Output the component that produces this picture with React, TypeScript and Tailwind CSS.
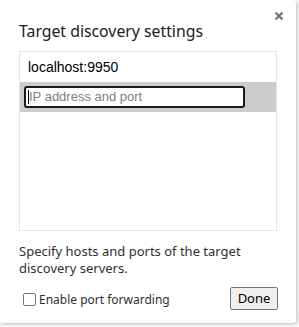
import React from 'react';

export default function App() {
  return (
    <div className="w-[299px] h-[327px] bg-white">
      <div
        className="relative flex flex-col w-[296px] h-[323px] rounded-[3px] bg-white shadow-[1px_1px_4px_rgba(0,0,0,0.3)] px-[19px] pt-[20px]"
        style={{ fontFamily: '"Noto Sans", "Open Sans", sans-serif' }}
      >
        <button className="absolute right-[12px] top-[11px] w-[10px] h-[10px] flex items-center justify-center">
          <svg width="10" height="10" viewBox="0 0 10 10">
            <path d="M1.5 1.5 L8.5 8.5 M8.5 1.5 L1.5 8.5" stroke="#6e6e6e" strokeWidth="2" />
          </svg>
        </button>

        <h1 className="text-[15.8px] leading-[22px] text-[#202020] font-normal">Target discovery settings</h1>

        <div className="mt-[9px] h-[180px] border border-[#e6e6e6] flex flex-col">
          <div
            className="h-[30px] flex items-center pl-[8px] text-[14px] text-black"
            style={{ fontFamily: '"Liberation Sans", Arial, sans-serif' }}
          >
            localhost:9950
          </div>
          <div className="h-[30px] bg-[#cccccc] flex items-center pl-[4px]">
            <div
              className="w-[221px] h-[22px] bg-white border-2 border-[#1a1a1a] rounded-[3px] flex items-center pl-[2px] text-[13px] text-[#808080]"
              style={{ fontFamily: '"Liberation Sans", Arial, sans-serif' }}
            >
              <span className="w-px h-[14px] bg-black" />
              IP address and port
            </div>
          </div>
        </div>

        <p className="mt-[12px] text-[13px] leading-[17px] text-[#303030]">
          Specify hosts and ports of the target discovery servers.
        </p>

        <div className="mt-[10px] flex items-center justify-between">
          <label className="flex items-center gap-[3px] pl-[4px] pt-[2px] text-[12px] text-[#303030]">
            <span className="w-[13px] h-[13px] border border-[#767676] rounded-[2px] bg-white" />
            Enable port forwarding
          </label>
          <button className="w-[48px] h-[23px] mr-[-1px] bg-[#efefef] border border-[#767676] rounded-[2px] text-[13px] text-black">
            Done
          </button>
        </div>
      </div>
    </div>
  );
}
